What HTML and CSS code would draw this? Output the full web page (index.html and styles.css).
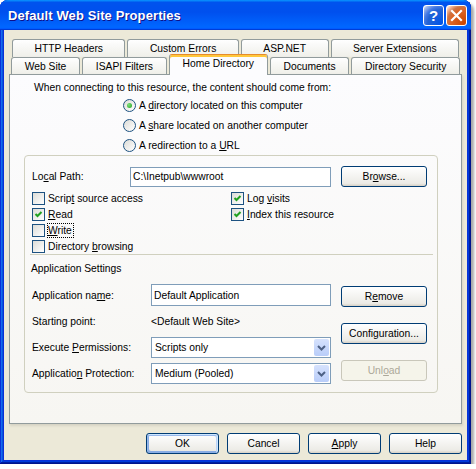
FILE: index.html
```html
<!DOCTYPE html>
<html lang="en">
<head>
    <meta charset="UTF-8">
    <title>Default Web Site Properties</title>
    <link rel="stylesheet" href="styles.css">
</head>
<body>
    <div class="window">
        <div class="titlebar">
            <span class="title">Default Web Site Properties</span>
            <div class="caption-buttons">
                <span class="cap-btn help">?</span>
                <span class="cap-btn close">
                    <svg width="19" height="19" viewBox="0 0 19 19"><path d="M5 5 L14 14 M14 5 L5 14" stroke="#fff" stroke-width="2.2" stroke-linecap="square"/></svg>
                </span>
            </div>
        </div>
        <div class="client">
            <div class="tabs">
                <div class="tabrow back">
                    <div class="tab">HTTP Headers</div>
                    <div class="tab">Custom Errors</div>
                    <div class="tab">ASP.NET</div>
                    <div class="tab">Server Extensions</div>
                </div>
                <div class="tabrow front">
                    <div class="tab">Web Site</div>
                    <div class="tab">ISAPI Filters</div>
                    <div class="tab selected">Home Directory</div>
                    <div class="tab">Documents</div>
                    <div class="tab">Directory Security</div>
                </div>
            </div>

            <div class="panel">
                <p class="intro">When connecting to this resource, the content should come from:</p>
                <div class="radios">
                    <label class="option"><span class="radio checked"></span><span>A <u>d</u>irectory located on this computer</span></label>
                    <label class="option"><span class="radio"></span><span>A <u>s</u>hare located on another computer</span></label>
                    <label class="option"><span class="radio"></span><span>A redirection to a <u>U</u>RL</span></label>
                </div>

                <div class="group">
                    <div class="path-row">
                        <span class="path-label">Lo<u>c</u>al Path:</span>
                        <div class="textbox path-box">C:\Inetpub\wwwroot</div>
                        <button class="btn">Br<u>o</u>wse...</button>
                    </div>

                    <div class="checks">
                        <label class="option"><span class="checkbox"></span><span>Scrip<u>t</u> source access</span></label>
                        <label class="option"><span class="checkbox checked"><svg width="11" height="11" viewBox="0 0 11 11"><path d="M2.5 5 L4.5 7 L8.5 3" stroke="#21a121" stroke-width="2" fill="none"/></svg></span><span>Log <u>v</u>isits</span></label>
                        <label class="option"><span class="checkbox checked"><svg width="11" height="11" viewBox="0 0 11 11"><path d="M2.5 5 L4.5 7 L8.5 3" stroke="#21a121" stroke-width="2" fill="none"/></svg></span><span><u>R</u>ead</span></label>
                        <label class="option"><span class="checkbox checked"><svg width="11" height="11" viewBox="0 0 11 11"><path d="M2.5 5 L4.5 7 L8.5 3" stroke="#21a121" stroke-width="2" fill="none"/></svg></span><span><u>I</u>ndex this resource</span></label>
                        <label class="option"><span class="checkbox"></span><span class="focus"><u>W</u>rite</span></label>
                        <span></span>
                        <label class="option"><span class="checkbox"></span><span>Directory <u>b</u>rowsing</span></label>
                    </div>

                    <div class="separator"></div>
                    <div class="section-title">Application Settings</div>

                    <div class="app">
                        <div class="app-fields">
                            <span>Application na<u>m</u>e:</span>
                            <div class="textbox">Default Application</div>
                            <span>Starting point:</span>
                            <span>&lt;Default Web Site&gt;</span>
                            <span>Execute <u>P</u>ermissions:</span>
                            <div class="combo">
                                <span>Scripts only</span>
                                <span class="combo-arrow"><svg width="15" height="17" viewBox="0 0 15 17"><path d="M4 7 L7.5 10.5 L11 7" stroke="#4d6185" stroke-width="2" fill="none"/></svg></span>
                            </div>
                            <span>Applicatio<u>n</u> Protection:</span>
                            <div class="combo">
                                <span>Medium (Pooled)</span>
                                <span class="combo-arrow"><svg width="15" height="17" viewBox="0 0 15 17"><path d="M4 7 L7.5 10.5 L11 7" stroke="#4d6185" stroke-width="2" fill="none"/></svg></span>
                            </div>
                        </div>
                        <div class="app-buttons">
                            <button class="btn">R<u>e</u>move</button>
                            <button class="btn">Confi<u>g</u>uration...</button>
                            <button class="btn" disabled>Unl<u>o</u>ad</button>
                        </div>
                    </div>
                </div>
            </div>

            <div class="dialog-buttons">
                <button class="btn wide default">OK</button>
                <button class="btn wide">Cancel</button>
                <button class="btn wide"><u>A</u>pply</button>
                <button class="btn wide">Help</button>
            </div>
        </div>
    </div>
</body>
</html>
```

FILE: styles.css
```css
* { box-sizing: border-box; }
body {
    margin: 0;
    background: #fff;
    font-family: "Liberation Sans", Arial, sans-serif;
    font-size: 10.3px;
    line-height: 13px;
    color: #000;
}
u { text-decoration: underline; text-underline-offset: 1px; }

.window {
    width: 471px;
    height: 464px;
    display: flex;
    flex-direction: column;
    background: #0831d9;
    border-radius: 8px 8px 0 0;
    box-shadow: inset -1px -1px #00138c, inset 1px 1px #0831d9, inset -2px -2px #001ea0,
                inset 2px 2px #166aee, inset -3px -3px #003bda, inset 3px 3px #0855dd,
                3px 3px 3px rgba(0,0,0,0.35);
}
.titlebar {
    height: 30px;
    display: flex;
    align-items: center;
    justify-content: space-between;
    padding: 0 4px 0 8px;
    border-radius: 8px 8px 0 0;
    background: linear-gradient(180deg, #0997ff, #0053ee 8%, #0050ee 40%, #06f 88%, #06f 93%, #005bff 95%, #003dd7 96%, #003dd7);
}
.title {
    color: #fff;
    font-weight: bold;
    font-size: 13px;
    text-shadow: 1px 1px #0f1089;
    letter-spacing: 0.1px;
}
.caption-buttons { display: flex; gap: 2px; margin-top: 1px; }
.cap-btn {
    width: 21px;
    height: 21px;
    border: 1px solid #fff;
    border-radius: 3px;
    display: flex;
    align-items: center;
    justify-content: center;
    color: #fff;
}
.help {
    background: radial-gradient(circle at 90% 90%, #0054e9 0, #2263d5 55%, #4479e4 70%, #a3bbec 90%, #fff 100%);
    font-weight: bold;
    font-size: 15px;
}
.close {
    background: radial-gradient(circle at 90% 90%, #cc4600 0, #dc6527 55%, #cd7546 70%, #ffccb2 90%, #fff 100%);
}

.client {
    flex: 1;
    margin: 0 4px 4px;
    padding: 9px 5px 0;
    background: #ece9d8;
}

/* tabs */
.tabs { display: flex; flex-direction: column; }
.tabrow { display: flex; gap: 2px; }
.tabrow.back { height: 18px; padding: 0 3px; }
.tabrow.front { height: 17px; padding: 0 2px; align-items: flex-end; }
.tab {
    flex: 1 1 auto;
    height: 18px;
    padding: 0 6px;
    display: flex;
    align-items: center;
    justify-content: center;
    white-space: nowrap;
    border: 1px solid #919b9c;
    border-bottom: none;
    border-radius: 3px 3px 0 0;
    background: linear-gradient(180deg, #fff, #fafaf9 26%, #f0f0ea 95%, #ecebe6);
}
.front .tab { height: 17px; padding-top: 1px; }
.front .tab.selected {
    height: 21px;
    margin-bottom: -1px;
    padding-top: 0;
    padding-bottom: 3px;
    position: relative;
    z-index: 1;
    background: #fcfcfe;
    border-top: 1px solid #e68b2c;
    box-shadow: inset 0 2px #ffc83c;
}

.panel {
    height: 350px;
    border: 1px solid #919b9c;
    background: linear-gradient(180deg, #fcfcfe, #f7f6f2);
    box-shadow: 1px 2px 2px 0 rgba(208,206,191,0.75);
}
.intro { margin: 0; padding: 6px 0 0 24px; }
.radios { display: flex; flex-direction: column; padding-left: 113px; margin-top: 1px; }
.radios .option { height: 20px; }
.option { display: flex; align-items: center; gap: 3px; white-space: nowrap; }

.radio {
    width: 13px;
    height: 13px;
    border: 1px solid #1d5281;
    border-radius: 50%;
    background: linear-gradient(135deg, #dcdcd7, #fff);
    display: flex;
    align-items: center;
    justify-content: center;
}
.radio.checked::after {
    content: "";
    width: 5px;
    height: 5px;
    border-radius: 50%;
    background: radial-gradient(circle at 35% 35%, #7de07a, #21a121);
}
.checkbox {
    width: 13px;
    height: 13px;
    border: 1px solid #1d5281;
    background: linear-gradient(135deg, #dcdcd7, #fff);
    display: flex;
}
.focus { outline: 1px dotted #000; outline-offset: 0; padding: 0 1px 0 0; }

.group {
    margin-left: 14px;
    width: 414px;
    border: 1px solid #d0d0bf;
    border-radius: 4px;
    padding: 10px 9px 8px 7px;
}
.path-row { display: flex; align-items: center; }
.path-label { width: 98px; }
.textbox {
    height: 22px;
    border: 1px solid #7f9db9;
    background: #fff;
    padding: 0 2px;
    display: flex;
    align-items: center;
}
.path-box { width: 201px; height: 20px; margin-right: 10px; }

.checks {
    display: grid;
    grid-template-columns: 199px auto;
    grid-auto-rows: 16px;
    margin-top: 3px;
}
.separator { height: 1px; background: #d0d0bf; margin: 0 -5px 0 -2px; }
.section-title { margin: 7px 0 9px -1px; }

.app { display: flex; }
.app-fields {
    display: grid;
    grid-template-columns: 119px 180px;
    grid-auto-rows: 22px;
    row-gap: 4px;
    align-items: center;
}
.combo {
    height: 21px;
    border: 1px solid #7f9db9;
    background: #fff;
    display: flex;
    align-items: center;
    justify-content: space-between;
    padding: 0 1px 0 3px;
}
.combo-arrow {
    width: 15px;
    height: 17px;
    display: flex;
    border-radius: 2px;
    background: linear-gradient(180deg, #d6e2fd, #b9cdf9);
}
.app-buttons {
    display: flex;
    flex-direction: column;
    gap: 16px;
    padding-top: 2px;
    margin-left: 10px;
}

.btn {
    width: 86px;
    height: 21px;
    padding: 0;
    font: inherit;
    color: #000;
    border: 1px solid #003c74;
    border-radius: 3px;
    background: linear-gradient(180deg, #fff, #ecebe6 86%, #d6d0c5);
}
.btn:disabled {
    color: #aca899;
    border-color: #c9c7ba;
    background: #f5f4ea;
}
.btn.default {
    box-shadow: inset -1px 1px #cee7ff, inset 1px 2px #98b8ea, inset -2px 2px #bcd4f6, inset 1px -1px #89ade4, inset 2px -2px #89ade4;
}
.dialog-buttons {
    display: flex;
    justify-content: flex-end;
    gap: 8px;
    margin-top: 9px;
}
.btn.wide { width: 73px; }
```
